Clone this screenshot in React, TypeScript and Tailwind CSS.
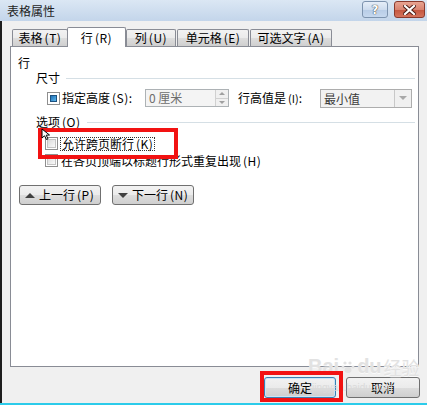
import clsx from 'clsx'

const FONT = "font-['Noto_Sans_CJK_SC','Noto_Sans',sans-serif]"

const tabs = [
  { label: '表格', key: 'T', w: 'w-[56px]', ml: 'ml-0' },
  { label: '行', key: 'R', w: 'w-[59px]', ml: '-ml-px', active: true },
  { label: '列', key: 'U', w: 'w-[50px]', ml: 'ml-0' },
  { label: '单元格', key: 'E', w: 'w-[72px]', ml: 'ml-px' },
  { label: '可选文字', key: 'A', w: 'w-[82px]', ml: 'ml-px' },
]

const btnBg =
  'bg-[linear-gradient(to_bottom,#f2f2f2_0%,#ebebeb_50%,#dddddd_51%,#cfcfcf_100%)]'

function Mn({ label, k }: { label: string; k: string }) {
  return (
    <span className="whitespace-nowrap">
      {label}
      <span className="ml-[2px] tracking-[0.5px]">({k})</span>
    </span>
  )
}

function CheckBox({ filled }: { filled?: boolean }) {
  return (
    <div className="w-[13px] h-[13px] border border-[#8f8f8f] bg-white p-px shrink-0">
      {filled ? (
        <div className="w-full h-full p-[1px]">
          <div className="w-full h-full border border-[#1c5180] bg-[linear-gradient(135deg,#1f6fb5,#5cb8ec)]" />
        </div>
      ) : (
        <div className="w-full h-full border border-[#c4c4c4] bg-[linear-gradient(135deg,#dadada,#fafafa)]" />
      )}
    </div>
  )
}

function Separator({ label }: { label: React.ReactNode }) {
  return (
    <div className="h-[14px] pl-[25px] pr-[3px] flex items-center leading-[14px]">
      <span className="whitespace-nowrap">{label}</span>
      <div className="flex-1 ml-[6px] h-px bg-[#d5dfe5]" />
    </div>
  )
}

export default function App() {
  return (
    <div
      className={clsx(
        'relative w-[427px] h-[405px] overflow-hidden flex flex-col bg-[#f0f0f0] text-[12px] text-black',
        FONT,
      )}
    >
      {/* Title bar */}
      <div className="h-[21px] shrink-0 flex items-center bg-[linear-gradient(to_bottom,#dbe7f4,#c3d5ea)] pl-[7px] pr-[2px]">
        <span className="text-[12px] leading-none text-[#1e1e1e]">表格属性</span>
        <div className="ml-auto flex items-start gap-[6px] self-start pt-px">
          <div className="w-[26px] h-[17px] rounded-[3px] border border-[#7d93ae] bg-[linear-gradient(to_bottom,#e6eef8_0%,#cedcee_50%,#b7cce6_51%,#c6d8ee_100%)] flex items-center justify-center">
            <span className="text-[12px] font-bold leading-none text-white [text-shadow:0_0_1px_#333,0_0_1px_#333] font-['DejaVu_Sans',sans-serif]">
              ?
            </span>
          </div>
          <div className="w-[31px] h-[17px] rounded-[3px] border border-[#8a3a2d] bg-[linear-gradient(to_bottom,#e8a492_0%,#d98471_50%,#c4553e_51%,#d4735c_100%)] flex items-center justify-center">
            <svg width="13" height="10" viewBox="0 0 13 10">
              <path d="M2 1 L11 9 M11 1 L2 9" stroke="#4a1a12" strokeWidth="4" strokeLinecap="square" />
              <path d="M2 1 L11 9 M11 1 L2 9" stroke="#ffffff" strokeWidth="2.2" strokeLinecap="square" />
            </svg>
          </div>
        </div>
      </div>

      {/* Body */}
      <div className="flex-1 flex flex-col border-l-2 border-[#1e1e1e] pt-[6px]">
        {/* Tabs */}
        <div className="h-[19px] flex items-end pl-[10px] relative z-10">
          {tabs.map((t) =>
            t.active ? (
              <div
                key={t.key}
                className={clsx(
                  t.w,
                  t.ml,
                  'h-[20px] -mb-px border border-b-0 border-[#898c95] rounded-t-[2px] bg-white flex items-center justify-center leading-none',
                )}
              >
                <Mn label={t.label} k={t.key} />
              </div>
            ) : (
              <div
                key={t.key}
                className={clsx(
                  t.w,
                  t.ml,
                  btnBg,
                  'h-[17px] border border-b-0 border-[#898c95] rounded-t-[2px] flex items-center justify-center leading-none',
                )}
              >
                <Mn label={t.label} k={t.key} />
              </div>
            ),
          )}
        </div>

        {/* Panel */}
        <div className="ml-[8px] w-[409px] h-[321px] border border-[#898c95] bg-white flex flex-col">
          <div className="mt-[9px] h-[14px] pl-[7px] leading-[14px]">行</div>
          <div className="mt-px">
            <Separator label="尺寸" />
          </div>

          {/* Height row */}
          <div className="mt-[3px] h-[20px] pl-[36px] flex items-center">
            <CheckBox filled />
            <span className="ml-[2px] w-[83px] whitespace-nowrap leading-none">
              <Mn label="指定高度" k="S" />:
            </span>
            <div className="w-[84px] h-[18px] border border-[#adb2b5] bg-[#f4f4f4] flex">
              <span className="flex-1 pl-[3px] leading-[16px] text-[#6d6d6d]">0 厘米</span>
              <div className="w-[13px] h-full flex flex-col border-l border-[#d0d0d0]">
                <div className="flex-1 flex items-center justify-center border-b border-[#d0d0d0] bg-[#f0f0f0]">
                  <div className="w-0 h-0 border-l-[3px] border-r-[3px] border-b-[3px] border-l-transparent border-r-transparent border-b-[#a0a0a0]" />
                </div>
                <div className="flex-1 flex items-center justify-center bg-[#f0f0f0]">
                  <div className="w-0 h-0 border-l-[3px] border-r-[3px] border-t-[3px] border-l-transparent border-r-transparent border-t-[#a0a0a0]" />
                </div>
              </div>
            </div>
            <span className="ml-[9px] w-[82px] whitespace-nowrap leading-none">
              行高值是<span className="ml-[2px] text-[11px]">(I)</span>:
            </span>
            <div className="w-[92px] h-[19px] border border-[#adadad] bg-[#f2f2f2] flex">
              <span className="flex-1 pl-[3px] leading-[17px] text-[#3a3a3a]">最小值</span>
              <div className="w-[17px] h-full border-l border-[#c8c8c8] bg-[#f0f0f0] flex items-center justify-center">
                <div className="w-0 h-0 border-l-[4px] border-r-[4px] border-t-[4px] border-l-transparent border-r-transparent border-t-[#a8a8a8]" />
              </div>
            </div>
          </div>

          <div className="mt-[7px]">
            <Separator label={<Mn label="选项" k="O" />} />
          </div>

          {/* Options */}
          <div className="mt-[7px] h-[15px] pl-[34px] flex items-center">
            <CheckBox />
            <span className="ml-[2px] px-px border border-dotted border-[#333] leading-[12px]">
              <Mn label="允许跨页断行" k="K" />
            </span>
          </div>
          <div className="mt-[2px] h-[15px] pl-[34px] flex items-center">
            <CheckBox />
            <span className="ml-[3px] leading-none">
              <Mn label="在各页顶端以标题行形式重复出现" k="H" />
            </span>
          </div>

          {/* Move buttons */}
          <div className="mt-[17px] pl-[8px] flex gap-[11px]">
            <div
              className={clsx(
                btnBg,
                'w-[82px] h-[20px] rounded-[3px] border border-[#707070] flex items-center pl-[5px] gap-[4px] leading-none',
              )}
            >
              <div className="w-0 h-0 border-l-[5px] border-r-[5px] border-b-[5px] border-l-transparent border-r-transparent border-b-[#404040]" />
              <Mn label="上一行" k="P" />
            </div>
            <div
              className={clsx(
                btnBg,
                'w-[82px] h-[20px] rounded-[3px] border border-[#707070] flex items-center pl-[5px] gap-[4px] leading-none',
              )}
            >
              <div className="w-0 h-0 border-l-[5px] border-r-[5px] border-t-[5px] border-l-transparent border-r-transparent border-t-[#404040]" />
              <Mn label="下一行" k="N" />
            </div>
          </div>
        </div>

        {/* Dialog buttons */}
        <div className="mt-[10px] flex justify-end gap-[10px] pr-[7px]">
          <div className="w-[72px] h-[21px] rounded-[3px] border border-[#3c7fb1] shadow-[inset_0_0_0_1px_#c9e6f8] bg-[linear-gradient(to_bottom,#f2f2f2_0%,#ebebeb_50%,#dddddd_51%,#cfcfcf_100%)] flex items-center justify-center leading-none">
            确定
          </div>
          <div
            className={clsx(
              btnBg,
              'w-[74px] h-[21px] rounded-[3px] border border-[#707070] flex items-center justify-center leading-none',
            )}
          >
            取消
          </div>
        </div>
      </div>
      <div className="h-[2px] shrink-0 bg-[#2ccbea]" />

      {/* watermark */}
      <div className="absolute left-[308px] top-[356px] flex items-end gap-[2px] text-[#e2e2e2] [text-shadow:0_1px_0_#fafafa] pointer-events-none">
        <span className="text-[20px] font-bold leading-none font-['Liberation_Sans',sans-serif]">Bai</span>
        <svg width="14" height="14" viewBox="0 0 14 14" className="mb-[2px]">
          <circle cx="4" cy="3" r="1.6" fill="#e2e2e2" />
          <circle cx="9" cy="3" r="1.6" fill="#e2e2e2" />
          <circle cx="2" cy="7" r="1.5" fill="#e2e2e2" />
          <circle cx="12" cy="7" r="1.5" fill="#e2e2e2" />
          <ellipse cx="7" cy="10" rx="3.5" ry="3" fill="#e2e2e2" />
        </svg>
        <span className="text-[20px] font-bold leading-none font-['Liberation_Sans',sans-serif]">du</span>
        <span className="text-[18px] leading-none">经验</span>
      </div>
      <div className="absolute left-[312px] top-[383px] text-[10px] leading-none text-[#dadada] font-['Liberation_Sans',sans-serif] pointer-events-none">
        jingyan.baidu.com
      </div>

      {/* annotations */}
      <div className="absolute left-[38px] top-[128px] w-[140px] h-[31px] border-4 border-[#f21212]" />
      <div className="absolute left-[260px] top-[371px] w-[83px] h-[31px] border-4 border-[#f21212]" />
      <svg className="absolute left-[41px] top-[128px]" width="10" height="12" viewBox="0 0 10 12">
        <path d="M1 1 L1 10 L3.5 7.8 L5.5 11.5 L7 10.8 L5.2 7.2 L8.5 7 Z" fill="white" stroke="black" strokeWidth="1" />
      </svg>
    </div>
  )
}
